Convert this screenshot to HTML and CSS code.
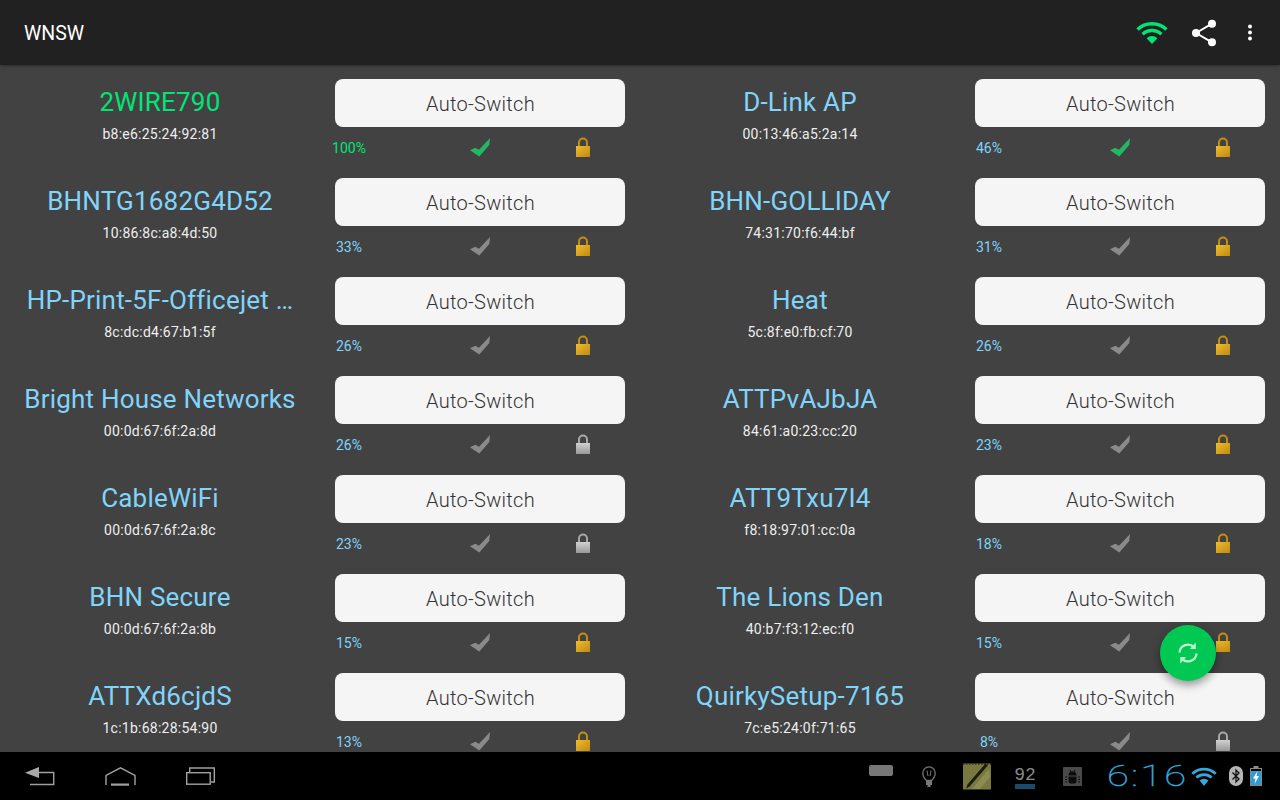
FILE: index.html
```html
<!DOCTYPE html>
<html>
<head>
<meta charset="utf-8">
<title>WNSW</title>
<link rel="stylesheet" href="styles.css">
</head>
<body>
<svg class="defs" width="0" height="0" aria-hidden="true">
  <defs>
    <linearGradient id="gold" x1="0" y1="0" x2="1" y2="1">
      <stop offset="0" stop-color="#eebc2c"/><stop offset="1" stop-color="#c08a12"/>
    </linearGradient>
    <linearGradient id="silver" x1="0" y1="0" x2="0" y2="1">
      <stop offset="0" stop-color="#d0d0d0"/><stop offset="1" stop-color="#989898"/>
    </linearGradient>
    <symbol id="check" viewBox="0 0 20 19">
      <polygon points="0,12.3 5.3,9.7 9,11.7 20,0 19.3,7 9.3,18.6"/>
    </symbol>
    <symbol id="lock-gold" viewBox="0 0 16 20">
      <path d="M4 10V5.5a4 4 0 0 1 8 0V10" fill="none" stroke="#c48d14" stroke-width="2"/>
      <rect x="1" y="9" width="14" height="11" fill="url(#gold)"/>
    </symbol>
    <symbol id="lock-silver" viewBox="0 0 16 20">
      <path d="M4 10V5.5a4 4 0 0 1 8 0V10" fill="none" stroke="#a8a8a8" stroke-width="2"/>
      <rect x="1" y="9" width="14" height="11" fill="url(#silver)"/>
    </symbol>
  </defs>
</svg>

<header class="topbar">
  <span class="title">WNSW</span>
  <div class="actions">
    <svg class="act-wifi" width="32" height="23" viewBox="0 0 32 23">
      <g fill="none" stroke="#00e676" stroke-width="3.4">
        <path d="M1.5 8.6A21 21 0 0 1 30.5 8.6"/>
        <path d="M6.6 13.2A14 14 0 0 1 25.4 13.2"/>
      </g>
      <path d="M10.6 17.2A8 8 0 0 1 21.4 17.2L16 23Z" fill="#00e676"/>
    </svg>
    <svg class="act-share" width="28" height="28" viewBox="0 0 28 28">
      <g stroke="#fff" stroke-width="2"><path d="M6 14L22 4.700M6 14L22 23.300"/></g>
      <g fill="#fff"><circle cx="6" cy="14" r="4"/><circle cx="22" cy="4.700" r="4"/><circle cx="22" cy="23.300" r="4"/></g>
    </svg>
    <svg class="act-more" width="4" height="18" viewBox="0 0 4 18" fill="#fff">
      <circle cx="2" cy="2.500" r="2"/><circle cx="2" cy="8.500" r="2"/><circle cx="2" cy="14.500" r="2"/>
    </svg>
  </div>
</header>

<main class="list">
  <article class="cell"><div class="net"><div class="name on">2WIRE790</div><div class="mac">b8:e6:25:24:92:81</div></div><div class="ctl"><button class="switch">Auto-Switch</button><div class="stats"><span class="pct on-soft">100%</span><svg class="check ok"><use href="#check"/></svg><svg class="lock"><use href="#lock-gold"/></svg></div></div></article>
  <article class="cell"><div class="net"><div class="name">D-Link AP</div><div class="mac">00:13:46:a5:2a:14</div></div><div class="ctl"><button class="switch">Auto-Switch</button><div class="stats"><span class="pct">46%</span><svg class="check ok"><use href="#check"/></svg><svg class="lock"><use href="#lock-gold"/></svg></div></div></article>

  <article class="cell"><div class="net"><div class="name">BHNTG1682G4D52</div><div class="mac">10:86:8c:a8:4d:50</div></div><div class="ctl"><button class="switch">Auto-Switch</button><div class="stats"><span class="pct">33%</span><svg class="check"><use href="#check"/></svg><svg class="lock"><use href="#lock-gold"/></svg></div></div></article>
  <article class="cell"><div class="net"><div class="name">BHN-GOLLIDAY</div><div class="mac">74:31:70:f6:44:bf</div></div><div class="ctl"><button class="switch">Auto-Switch</button><div class="stats"><span class="pct">31%</span><svg class="check"><use href="#check"/></svg><svg class="lock"><use href="#lock-gold"/></svg></div></div></article>

  <article class="cell"><div class="net"><div class="name">HP-Print-5F-Officejet …</div><div class="mac">8c:dc:d4:67:b1:5f</div></div><div class="ctl"><button class="switch">Auto-Switch</button><div class="stats"><span class="pct">26%</span><svg class="check"><use href="#check"/></svg><svg class="lock"><use href="#lock-gold"/></svg></div></div></article>
  <article class="cell"><div class="net"><div class="name">Heat</div><div class="mac">5c:8f:e0:fb:cf:70</div></div><div class="ctl"><button class="switch">Auto-Switch</button><div class="stats"><span class="pct">26%</span><svg class="check"><use href="#check"/></svg><svg class="lock"><use href="#lock-gold"/></svg></div></div></article>

  <article class="cell"><div class="net"><div class="name">Bright House Networks</div><div class="mac">00:0d:67:6f:2a:8d</div></div><div class="ctl"><button class="switch">Auto-Switch</button><div class="stats"><span class="pct">26%</span><svg class="check"><use href="#check"/></svg><svg class="lock"><use href="#lock-silver"/></svg></div></div></article>
  <article class="cell"><div class="net"><div class="name">ATTPvAJbJA</div><div class="mac">84:61:a0:23:cc:20</div></div><div class="ctl"><button class="switch">Auto-Switch</button><div class="stats"><span class="pct">23%</span><svg class="check"><use href="#check"/></svg><svg class="lock"><use href="#lock-gold"/></svg></div></div></article>

  <article class="cell"><div class="net"><div class="name">CableWiFi</div><div class="mac">00:0d:67:6f:2a:8c</div></div><div class="ctl"><button class="switch">Auto-Switch</button><div class="stats"><span class="pct">23%</span><svg class="check"><use href="#check"/></svg><svg class="lock"><use href="#lock-silver"/></svg></div></div></article>
  <article class="cell"><div class="net"><div class="name">ATT9Txu7I4</div><div class="mac">f8:18:97:01:cc:0a</div></div><div class="ctl"><button class="switch">Auto-Switch</button><div class="stats"><span class="pct">18%</span><svg class="check"><use href="#check"/></svg><svg class="lock"><use href="#lock-gold"/></svg></div></div></article>

  <article class="cell"><div class="net"><div class="name">BHN Secure</div><div class="mac">00:0d:67:6f:2a:8b</div></div><div class="ctl"><button class="switch">Auto-Switch</button><div class="stats"><span class="pct">15%</span><svg class="check"><use href="#check"/></svg><svg class="lock"><use href="#lock-gold"/></svg></div></div></article>
  <article class="cell"><div class="net"><div class="name">The Lions Den</div><div class="mac">40:b7:f3:12:ec:f0</div></div><div class="ctl"><button class="switch">Auto-Switch</button><div class="stats"><span class="pct">15%</span><svg class="check"><use href="#check"/></svg><svg class="lock"><use href="#lock-gold"/></svg></div></div></article>

  <article class="cell"><div class="net"><div class="name">ATTXd6cjdS</div><div class="mac">1c:1b:68:28:54:90</div></div><div class="ctl"><button class="switch">Auto-Switch</button><div class="stats"><span class="pct">13%</span><svg class="check"><use href="#check"/></svg><svg class="lock"><use href="#lock-gold"/></svg></div></div></article>
  <article class="cell"><div class="net"><div class="name">QuirkySetup-7165</div><div class="mac">7c:e5:24:0f:71:65</div></div><div class="ctl"><button class="switch">Auto-Switch</button><div class="stats"><span class="pct">8%</span><svg class="check"><use href="#check"/></svg><svg class="lock"><use href="#lock-silver"/></svg></div></div></article>

  <button class="fab" aria-label="Refresh">
    <svg width="24" height="24" viewBox="0 0 24 24" fill="none" stroke="#b9f6ca" stroke-width="2.400">
      <path d="M3.500 11.500A8.500 8.500 0 0 1 18 6.200"/>
      <path d="M20.500 12.500A8.500 8.500 0 0 1 6 17.800"/>
      <path d="M19.800 1.500V8H13.800Z" fill="#b9f6ca" stroke="none"/>
      <path d="M4.200 22.500V16H10.200Z" fill="#b9f6ca" stroke="none"/>
    </svg>
  </button>
</main>

<footer class="navbar">
  <div class="softkeys">
    <svg width="30" height="19" viewBox="0 0 30 19">
      <polygon points="0,5.800 14,0 14,11" fill="#a8a8a8"/>
      <path d="M14 5.500H28.700V17.500H5" fill="none" stroke="#a0a0a0" stroke-width="1.400"/>
    </svg>
    <svg width="31" height="19" viewBox="0 0 31 19">
      <path d="M1 18V8.500L15.500 0.800L30 8.500V18" fill="none" stroke="#a0a0a0" stroke-width="1.400"/>
      <rect x="6" y="16.500" width="18" height="2.200" fill="#a0a0a0"/>
    </svg>
    <svg width="29" height="18" viewBox="0 0 29 18" fill="none" stroke="#a0a0a0" stroke-width="1.400">
      <rect x="0.700" y="5.700" width="23.500" height="11.500"/>
      <path d="M3.700 5V1H28.300V15H25"/>
    </svg>
  </div>
  <div class="tray">
    <span class="t-rect"></span>
    <svg class="t-bulb" width="14" height="21" viewBox="0 0 14 21">
      <path d="M4.500 14.500C1 11.500 .8 8.500 .8 7a6.200 6.200 0 0 1 12.400 0C13.200 8.500 13 11.500 9.500 14.500Z" fill="none" stroke="#777" stroke-width="1.300"/>
      <path d="M5 4.500L6 10M9 4.500L8 10" stroke="#777" stroke-width="1" fill="none"/>
      <rect x="4" y="14" width="6" height="5" fill="#777"/><rect x="5.500" y="19" width="3" height="2" fill="#777"/>
    </svg>
    <svg class="t-note" width="28" height="27" viewBox="0 0 28 27">
      <rect width="28" height="26" y="0.500" fill="#78783f"/>
      <path d="M0 1H28" stroke="#33331c" stroke-width="1.500" stroke-dasharray="1.500 1.500"/>
      <path d="M26 6L9 26H17L27 14Z" fill="#8c8c52"/>
      <path d="M22.500 0.500L4.500 21.500L3 25.500L6.800 23.200L24.800 2.500Z" fill="#1c1c14"/>
      <rect y="26" width="28" height="1" fill="#3a3a20"/>
    </svg>
    <div class="t-num"><span class="t-digits">92</span><span class="t-numbar"></span></div>
    <svg class="t-bug" width="19" height="19" viewBox="0 0 19 19">
      <rect width="19" height="19" rx="1" fill="#4a4a4a"/>
      <path d="M5.500 8.500a4 4 0 0 1 8 0Z" fill="#0c0c0c"/>
      <path d="M7 3L8 5M12 3L11 5" stroke="#0c0c0c" stroke-width="1"/>
      <path d="M5.500 9.500h8v5a2 2 0 0 1 -2 2h-4a2 2 0 0 1 -2 -2Z" fill="#0c0c0c"/>
      <path d="M2 10h2M2 12.500h2M2 15h2M15 10h2M15 12.500h2M15 15h2" stroke="#0c0c0c" stroke-width="1"/>
    </svg>
    <span class="clock">6:16</span>
    <svg class="t-wifi" width="26" height="19" viewBox="0 0 26 19">
      <g fill="none" stroke="#33a9dc" stroke-width="2.800">
        <path d="M1.300 6.800A17 17 0 0 1 24.700 6.800"/>
        <path d="M5.400 10.500A11.400 11.400 0 0 1 20.600 10.500"/>
      </g>
      <path d="M8.500 13.600A6.600 6.600 0 0 1 17.500 13.600L13 19Z" fill="#33a9dc"/>
    </svg>
    <svg class="t-bt" width="14" height="20" viewBox="0 0 14 20">
      <rect width="14" height="20" rx="7" fill="#b5b5b5"/>
      <path d="M3.500 6.500L10 13L7 16V4L10 7L3.500 13.500" fill="none" stroke="#111" stroke-width="1.300"/>
    </svg>
    <svg class="t-batt" width="12" height="20" viewBox="0 0 12 20">
      <rect x="3.500" width="5" height="2" fill="#8a8a8a"/>
      <rect y="2" width="12" height="18" fill="#8a8a8a"/>
      <rect x="1" y="3" width="10" height="16" fill="#000"/>
      <rect x="1" y="5" width="10" height="14" fill="#2a9fd6"/>
      <path d="M7.500 5L3 12.500H5.500L4.500 18L9 10H6.500Z" fill="#fff"/>
    </svg>
  </div>
</footer>
</body>
</html>
```
FILE: styles.css
```css
* { box-sizing: border-box; }
html, body { margin: 0; height: 100%; }
body {
  width: 1280px;
  height: 800px;
  overflow: hidden;
  display: flex;
  flex-direction: column;
  background: #424242;
  font-family: Roboto, "Liberation Sans", sans-serif;
}
.defs { display: block; height: 0; }

.topbar {
  flex: 0 0 65px;
  display: flex;
  align-items: center;
  justify-content: space-between;
  padding: 0 28px 0 24px;
  background: #212121;
  box-shadow: 0 1px 3px rgba(0,0,0,.35);
  position: relative;
  z-index: 2;
}
.title { color: #fff; font-size: 19.5px; font-weight: 400; margin-top: 2px; }
.actions { display: flex; align-items: center; }
.act-wifi { margin-right: 22px; }
.act-share { margin-right: 30px; }

.list {
  flex: 1 1 auto;
  min-height: 0;
  position: relative;
  overflow: hidden;
  display: grid;
  grid-template-columns: 640px 640px;
  grid-auto-rows: 99px;
  padding-top: 14px;
}
.cell { display: flex; }
.net { width: 320px; text-align: center; padding-top: 5px; }
.name {
  color: #81d4fa;
  font-size: 26px;
  font-weight: 400;
  line-height: 36px;
  letter-spacing: .2px;
  white-space: nowrap;
}
.name.on { color: #00e676; }
.mac { color: #eee; font-size: 14px; font-weight: 400; line-height: 18px; margin-top: 5px; letter-spacing: .25px; }

.ctl { margin-left: 15px; width: 290px; }
.switch {
  display: block;
  width: 290px;
  height: 48px;
  border: 0;
  border-radius: 8px;
  background: #f5f5f5;
  color: #333;
  font: 300 20px Roboto, "Liberation Sans", sans-serif;
  letter-spacing: .3px;
  padding: 2px 0 0 1px;
}
.stats { display: flex; align-items: center; height: 20px; margin-top: 11px; }
.pct {
  flex: 0 0 28px;
  min-width: 0;
  width: 28px;
  display: flex;
  justify-content: center;
  white-space: nowrap;
  color: #81d4fa;
  font-size: 14px;
  font-weight: 400;
}
.pct.on-soft { color: #00e676; }
.check { width: 20px; height: 19px; margin: 0 0 2px 107px; fill: #8a8a8a; flex: none; }
.check.ok { fill: #22b864; }
.lock { width: 16px; height: 20px; margin: 0 0 2px 85px; flex: none; }

.fab {
  position: absolute;
  left: 1160px;
  top: 560px;
  width: 56px;
  height: 56px;
  border: 0;
  padding: 0;
  border-radius: 50%;
  background: #00c853;
  box-shadow: 0 4px 8px rgba(0,0,0,.4);
  display: flex;
  align-items: center;
  justify-content: center;
}

.navbar {
  flex: 0 0 48px;
  display: flex;
  align-items: center;
  justify-content: space-between;
  background: #000;
  padding: 0 18px 0 25px;
}
.softkeys { display: flex; align-items: center; gap: 50px; }
.tray { display: flex; align-items: center; }
.t-rect { width: 24px; height: 11px; border-radius: 2px; background: #777; margin-bottom: 11px; }
.t-bulb { margin-left: 29px; }
.t-note { margin-left: 27px; }
.t-num { margin-left: 24px; margin-top: 4px; width: 20px; display: flex; flex-direction: column; align-items: center; }
.t-digits { color: #8a8a8a; font: 400 18px/15px "Liberation Mono", monospace; }
.t-numbar { width: 20px; height: 5px; background: #1c4a6b; margin-top: 1px; }
.t-bug { margin-left: 28px; margin-top: 1px; }
.clock {
  margin-left: 25px;
  width: 78px;
  color: #33a9dc;
  font: 100 29px/1 Roboto, sans-serif;
  -webkit-text-stroke: .4px #33a9dc;
  letter-spacing: 1.5px;
  white-space: nowrap;
  transform: scaleX(1.38);
  transform-origin: left center;
}
.t-wifi { margin-left: 6px; }
.t-bt { margin-left: 12px; }
.t-batt { margin-left: 7px; }
```
